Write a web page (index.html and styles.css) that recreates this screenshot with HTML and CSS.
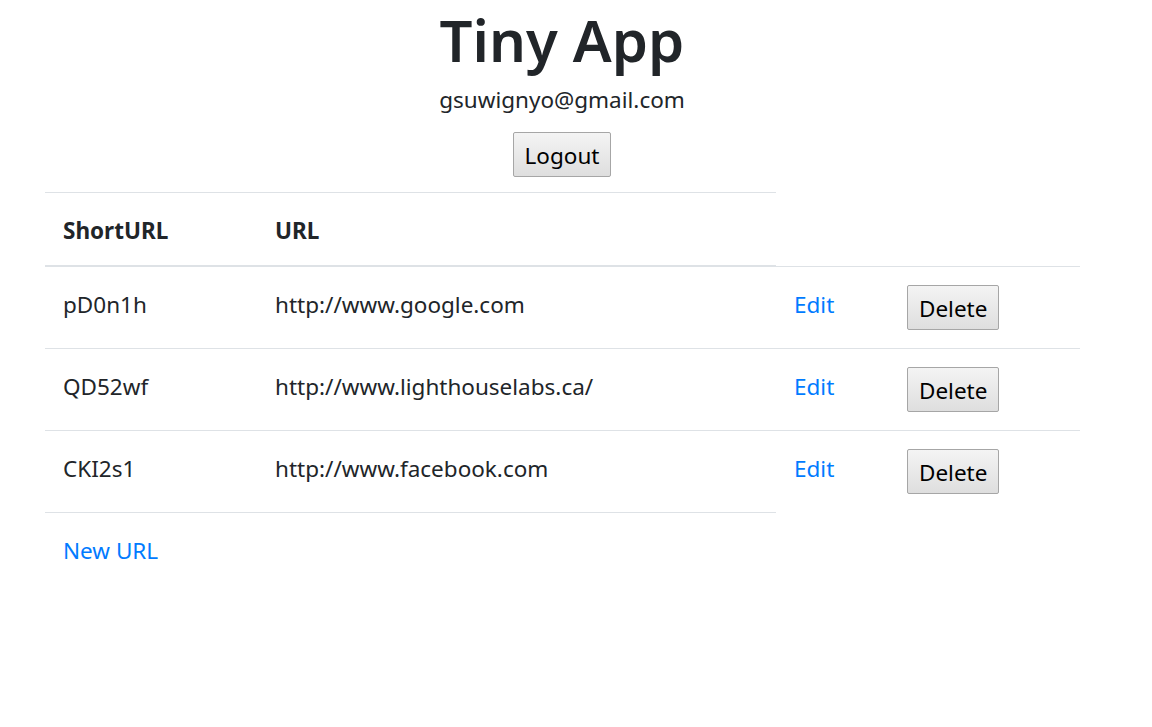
FILE: index.html
```html
<!DOCTYPE html>
<html lang="en">
<head>
<meta charset="utf-8">
<title>Tiny App</title>
<link rel="stylesheet" href="styles.css">
</head>
<body>
<header class="top">
  <h1 class="title">Tiny App</h1>
  <div class="user">gsuwignyo@gmail.com</div>
  <form class="logout-form"><button type="button" class="btn">Logout</button></form>
</header>
<main class="content">
  <table class="urls">
    <thead>
      <tr><th class="c1">ShortURL</th><th class="c2">URL</th></tr>
    </thead>
    <tbody>
      <tr><td class="c1">pD0n1h</td><td class="c2">http://www.google.com</td><td class="c3"><a href="#">Edit</a></td><td class="c4"><button type="button" class="btn">Delete</button></td></tr>
      <tr><td class="c1">QD52wf</td><td class="c2">http://www.lighthouselabs.ca/</td><td class="c3"><a href="#">Edit</a></td><td class="c4"><button type="button" class="btn">Delete</button></td></tr>
      <tr><td class="c1">CKI2s1</td><td class="c2">http://www.facebook.com</td><td class="c3"><a href="#">Edit</a></td><td class="c4"><button type="button" class="btn">Delete</button></td></tr>
    </tbody>
  </table>
  <div class="table-end"></div>
  <a class="new-link" href="#">New URL</a>
</main>
</body>
</html>
```
FILE: styles.css
```css
html, body {
  margin: 0;
  padding: 0;
  background: #fff;
}
body {
  font-family: "Noto Sans", "Open Sans", sans-serif;
  font-size: 22.5px;
  line-height: 36px;
  color: #212529;
}
a {
  color: #007bff;
  text-decoration: none;
}
.top {
  width: 1124px;
  display: flex;
  flex-direction: column;
  align-items: center;
}
.title {
  margin: 0 0 3px;
  font-size: 58px;
  line-height: 79px;
  font-weight: 600;
}
.user {
  line-height: 36px;
}
.logout-form {
  margin: 14px 0 15px;
}
.btn {
  font-family: inherit;
  font-size: 22.5px;
  line-height: 28px;
  color: #000;
  padding: 9px 11px 6px;
  border: 1px solid #a6a6a6;
  border-radius: 2px;
  background: linear-gradient(#f4f4f4, #dedede);
  cursor: pointer;
}
.content {
  padding-left: 45px;
}
.urls {
  border-collapse: collapse;
}
.urls th, .urls td {
  padding: 18px;
  vertical-align: top;
  text-align: left;
  border-top: 1px solid #dee2e6;
}
.urls th {
  padding-top: 20px;
  padding-bottom: 16px;
  font-weight: 700;
  border-bottom: 2px solid #dee2e6;
}
.urls td {
  padding-top: 20px;
  padding-bottom: 16px;
}
.urls td.c4 {
  padding-top: 18px;
  padding-bottom: 18px;
}
.c1 { width: 176px; }
.c2 { width: 483px; }
.c3 { width: 77px; }
.c4 { width: 155px; }
.table-end {
  width: 731px;
  border-top: 1px solid #dee2e6;
}
.new-link {
  display: inline-block;
  margin: 20px 0 0 18px;
}
```
